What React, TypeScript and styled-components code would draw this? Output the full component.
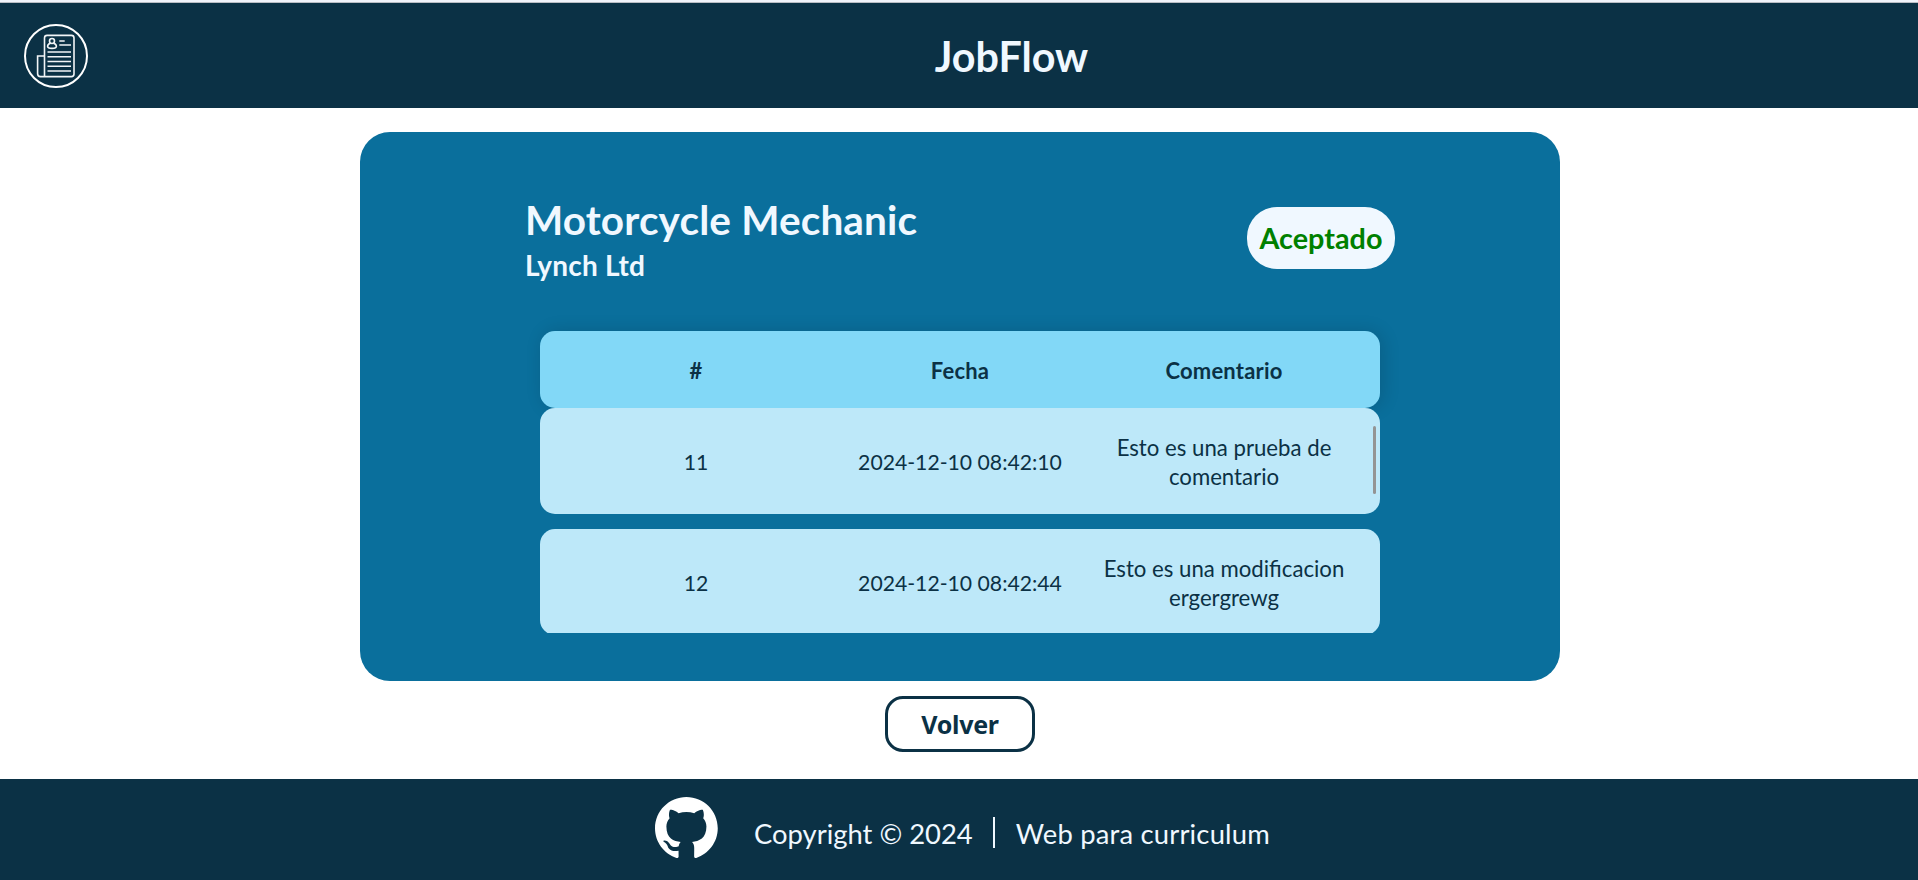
import React from "react";
import styled, { createGlobalStyle } from "styled-components";

const navy = "#0b3145";
const ice = "#f0f8ff";

const GlobalStyle = createGlobalStyle`
  * { box-sizing: border-box; }
  body { margin: 0; background: #fff; overflow: hidden; font-family: Lato, "Open Sans", sans-serif; }
  h1, h2, h3, p { margin: 0; }
`;

const Page = styled.div`
  display: flex; flex-direction: column; align-items: center;
  height: 880px;
  border-top: 2px solid #f1f3fa;
`;

const Header = styled.header`
  display: flex; align-items: center;
  width: 100%; height: 106px; padding-left: 24px;
  border-top: 1px solid #b9bdc4;
  background: ${navy};
`;

const LogoLink = styled.a`display: flex; width: 81px;`;

const HeaderTitle = styled.div`
  flex: 1; display: flex; justify-content: center; padding-top: 3px;
`;

const Text = styled.span<{ $size: number; $track?: number; $bold?: boolean; $color?: string }>`
  display: block;
  font-size: ${(p) => p.$size}px;
  line-height: 1.2;
  font-weight: ${(p) => (p.$bold ? 700 : 400)};
  color: ${(p) => p.$color ?? navy};
  letter-spacing: ${(p) => (p.$track ? `${p.$track}px` : "normal")};
  white-space: nowrap;
`;

const Card = styled.main`
  display: flex; flex-direction: column; align-items: center;
  width: 1200px; height: 549px; margin: 24px 0 0 2px;
  border-radius: 30px;
  background: #0a6f9c;
`;

const Heading = styled.div`
  display: flex; justify-content: space-between; align-items: flex-start;
  width: 870px; height: 199px; padding-top: 64px;
`;

const Titles = styled.div`display: flex; flex-direction: column; gap: 4px;`;

const Status = styled.div`
  display: flex; align-items: center; justify-content: center;
  width: 148px; height: 62px; margin-top: 11px;
  border-radius: 30px; background: ${ice};
`;

const Table = styled.section`width: 840px; height: 302px;`;

const HeadRow = styled.div`
  display: grid; grid-template-columns: repeat(3, 264px); justify-content: center; align-items: center; justify-items: center;
  height: 77px; padding-top: 3px; border-radius: 15px;
  background: #82d8f7;
  box-shadow: 3px 0 18px rgba(0, 0, 0, 0.14);
`;

const Body = styled.div`
  position: relative;
  display: flex; flex-direction: column; gap: 15px;
  height: 225px; overflow: hidden;
`;

const Row = styled.div`
  display: grid; grid-template-columns: repeat(3, 264px); justify-content: center; align-items: center; justify-items: center;
  flex: 0 0 106px; padding-top: 3px; border-radius: 15px;
  background: #bde8f9;
`;

const Comment = styled.div`display: flex; flex-direction: column; align-items: center; gap: 2.4px;`;

const ScrollThumb = styled.div`
  position: absolute; top: 18px; right: 4px; width: 3px; height: 68px;
  border-radius: 2px; background: #949494;
`;

const BackButton = styled.button`
  display: flex; align-items: center; justify-content: center;
  width: 150px; height: 56px; margin: 15px 0 0 2px; padding: 0;
  border: 3px solid ${navy}; border-radius: 18px;
  background: #fff; font-family: "Noto Sans", sans-serif;
`;

const Footer = styled.footer`
  display: flex; align-items: flex-start;
  width: 100%; flex: 1; margin-top: 27px; padding: 18px 0 0 655px;
  background: ${navy};
`;

const Credits = styled.div`display: flex; align-items: center; margin: 21px 0 0 36px;`;

const Divider = styled.span`width: 2px; height: 31px; margin: -3px 21px 0 20px; background: ${ice};`;

const Logo = () => (
  <svg width="64" height="64" viewBox="0 0 64 64" fill="none" stroke="#fff">
    <circle cx="32" cy="32" r="31" strokeWidth="2" />
    <g strokeWidth="1.6" stroke="#f2f5f7">
      <path d="M20.5 52.5V14a2.6 2.6 0 0 1 2.6-2.6H47.4a2.6 2.6 0 0 1 2.6 2.6V50a2.6 2.6 0 0 1-2.6 2.6H16.5a2.9 2.9 0 0 1-2.9-2.9V32h6.9" />
      <circle cx="28" cy="17" r="2.5" />
      <path d="M26.5 19.3c-2 .6-2.9 1.7-2.9 2.9 0 1.4 1.7 2.2 4.4 2.2s4.4-.8 4.4-2.2c0-1.2-.9-2.3-2.9-2.9" />
      <path d="M35.3 17h5.4M35.3 21H47M23.5 28H47M23.5 32.7H47M23.5 37.5H47M23.5 42.3H47M23.5 47H47" />
    </g>
  </svg>
);

const GithubMark = () => (
  <svg width="63" height="61" viewBox="0 0 98 96" fill="#fff" preserveAspectRatio="none">
    <path fillRule="evenodd" clipRule="evenodd" d="M48.854 0C21.839 0 0 22 0 49.217c0 21.756 13.993 40.172 33.405 46.69 2.427.49 3.316-1.059 3.316-2.362 0-1.141-.08-5.052-.08-9.127-13.59 2.934-16.42-5.867-16.42-5.867-2.184-5.704-5.42-7.17-5.42-7.17-4.448-3.015.324-3.015.324-3.015 4.934.326 7.523 5.052 7.523 5.052 4.367 7.496 11.404 5.378 14.235 4.074.404-3.178 1.699-5.378 3.074-6.6-10.839-1.141-22.243-5.378-22.243-24.283 0-5.378 1.94-9.778 5.014-13.2-.485-1.222-2.184-6.275.486-13.038 0 0 4.125-1.304 13.426 5.052a46.97 46.97 0 0 1 12.214-1.63c4.125 0 8.33.571 12.213 1.63 9.302-6.356 13.427-5.052 13.427-5.052 2.67 6.763.97 11.816.485 13.038 3.155 3.422 5.015 7.822 5.015 13.2 0 18.905-11.404 23.06-22.324 24.283 1.78 1.548 3.316 4.481 3.316 9.126 0 6.6-.08 11.897-.08 13.526 0 1.304.89 2.853 3.316 2.364 19.412-6.52 33.405-24.935 33.405-46.691C97.707 22 75.788 0 48.854 0z" />
  </svg>
);

const rows = [
  { id: "11", date: "2024-12-10 08:42:10", comment: ["Esto es una prueba de", "comentario"] },
  { id: "12", date: "2024-12-10 08:42:44", comment: ["Esto es una modificacion", "ergergrewg"] },
];

export default function App() {
  return (
    <Page>
      <GlobalStyle />
      <Header>
        <LogoLink><Logo /></LogoLink>
        <HeaderTitle><Text as="h1" $size={41.3} $bold $color={ice}>JobFlow</Text></HeaderTitle>
      </Header>
      <Card>
        <Heading>
          <Titles>
            <Text as="h2" $size={40.5} $track={0.15} $bold $color={ice}>Motorcycle Mechanic</Text>
            <Text as="h3" $size={28} $track={0.2} $bold $color={ice}>Lynch Ltd</Text>
          </Titles>
          <Status><Text $size={28.8} $bold $color="#008000">Aceptado</Text></Status>
        </Heading>
        <Table>
          <HeadRow>
            {["#", "Fecha", "Comentario"].map((t) => <Text key={t} $size={22} $track={0.2} $bold>{t}</Text>)}
          </HeadRow>
          <Body>
            {rows.map((r) => (
              <Row key={r.id}>
                <Text $size={21.2}>{r.id}</Text>
                <Text $size={21.2}>{r.date}</Text>
                <Comment>{r.comment.map((l) => <Text key={l} $size={22.2}>{l}</Text>)}</Comment>
              </Row>
            ))}
            <ScrollThumb />
          </Body>
        </Table>
      </Card>
      <BackButton><Text $size={25} $track={-0.3} $bold>Volver</Text></BackButton>
      <Footer>
        <GithubMark />
        <Credits>
          <Text $size={27.4} $color={ice}>Copyright © 2024</Text>
          <Divider />
          <Text $size={27.4} $track={0.2} $color={ice}>Web para curriculum</Text>
        </Credits>
      </Footer>
    </Page>
  );
}
